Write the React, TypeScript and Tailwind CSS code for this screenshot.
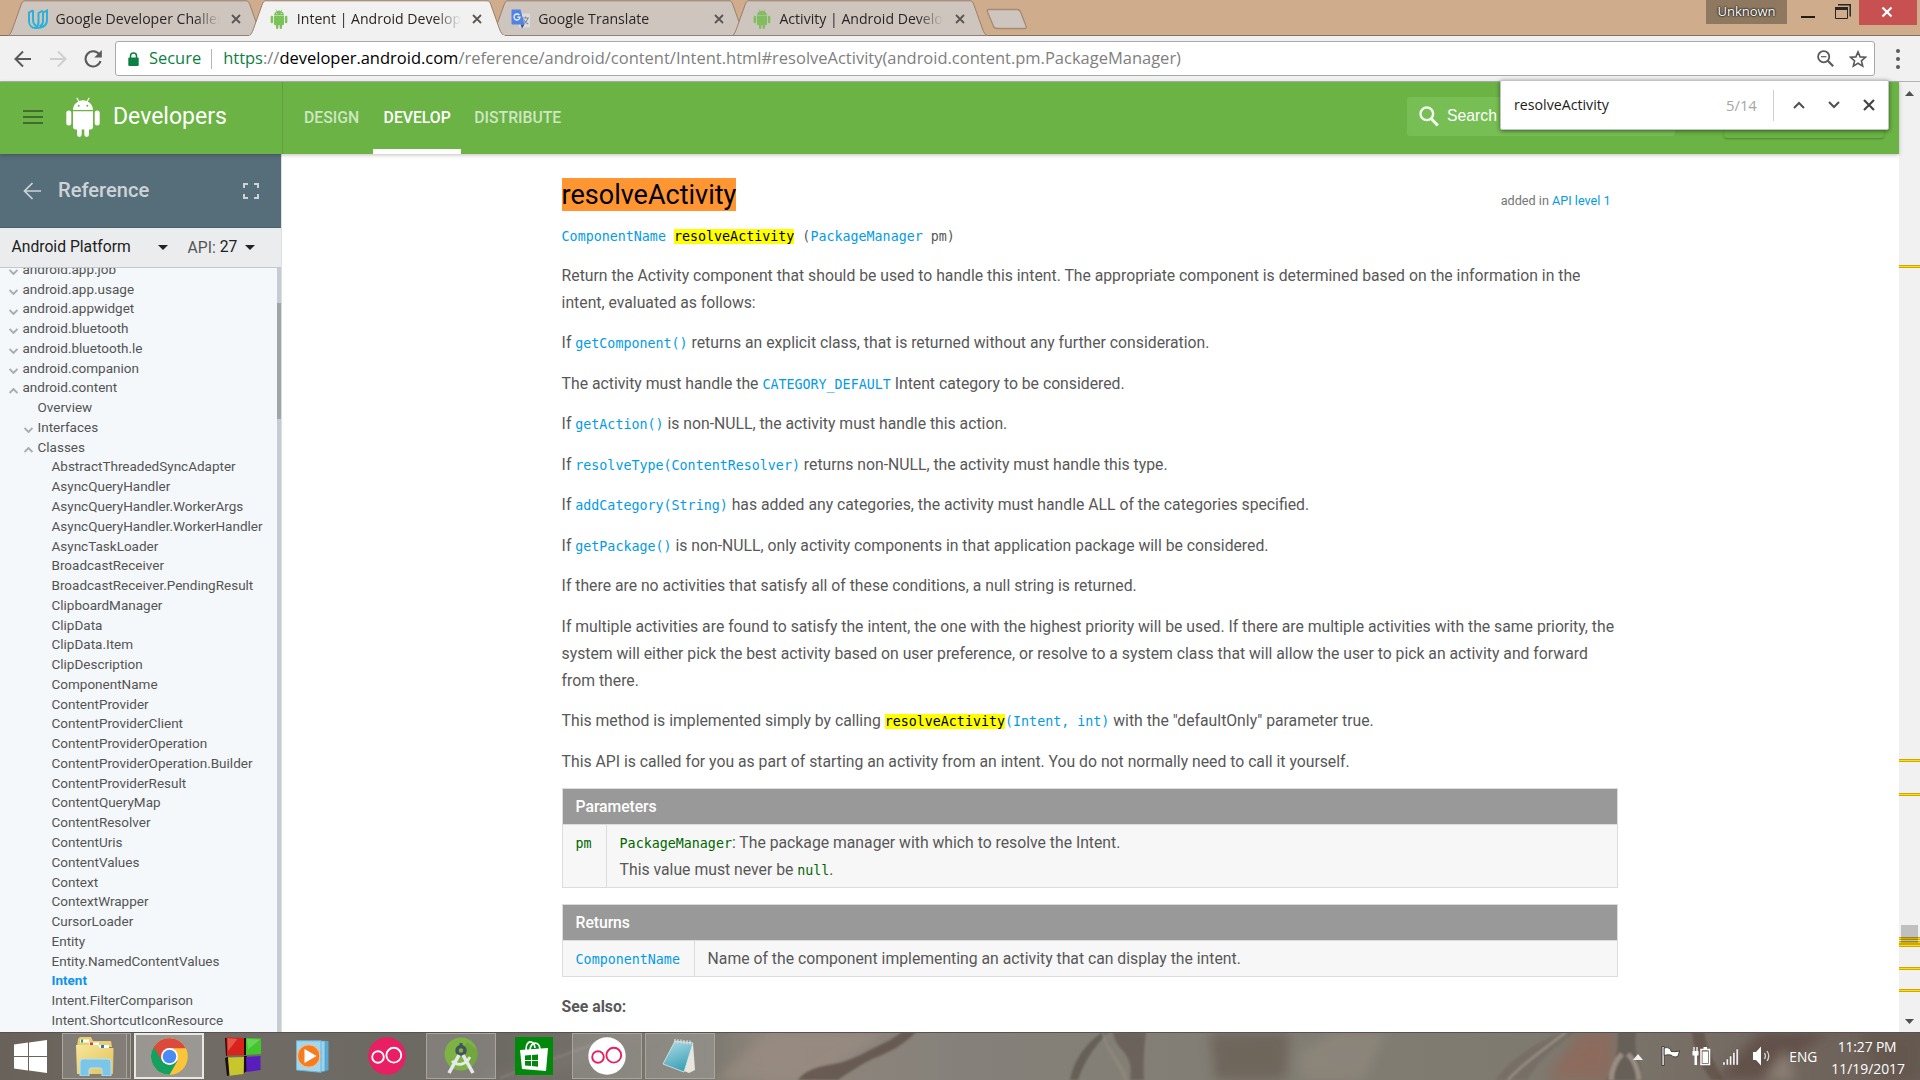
import type { ReactNode } from 'react';

const SEGOE = "font-['Open_Sans',sans-serif]";

/* ---------- small drawings ---------- */

function AndroidHead({ className, bg }: { className: string; bg: string }) {
  return (
    <svg className={className} viewBox="0 0 34 40" fill="currentColor">
      <path d="M7 13C7 8.8 9.3 5.9 12.3 4.4L10.3 1.2 11.2.6l2.1 3.3a11 11 0 0 1 7.4 0L22.8.6l.9.6-2 3.2C24.700 5.9 27 8.800 27 13z" />
      <path d="M7 14.200h20v15.900c0 1.400-1 2.300-2.300 2.300H23v5.200a2.300 2.300 0 0 1-4.700 0v-5.200h-2.600v5.200a2.300 2.300 0 0 1-4.700 0v-5.200H9.300C8 32.400 7 31.500 7 30.100z" />
      <rect x="0.300" y="13.500" width="5" height="15" rx="2.500" />
      <rect x="28.700" y="13.500" width="5" height="15" rx="2.500" />
      <circle cx="12.700" cy="8.800" r="1" fill={bg} />
      <circle cx="21.300" cy="8.800" r="1" fill={bg} />
    </svg>
  );
}

function UdacityIcon() {
  return (
    <svg className="h-[21px] w-5" viewBox="0 0 20 21" fill="none" stroke="#25b1dc" strokeWidth="1.900">
      <path d="M5 1.300 1 3.500V12c0 4.300 2.800 7 6.500 7 6.500 0 11.500-2.500 11.500-8V1.500l-4 2.300v8.400c0 2.300-1.300 4-3.500 4.800" />
      <path d="M5 1.300v9.500c0 3 1.200 5.200 3.500 6.300" />
      <path d="M7.500 19c2.200-1.300 3-3.200 3-6V4L15 1.500" />
    </svg>
  );
}

function TranslateIcon() {
  return (
    <svg className="h-5 w-5" viewBox="0 0 20 20">
      <rect x="8" y="4.500" width="11" height="14" rx="1" fill="#dcdcdc" />
      <path d="M11 9h7M14.500 7.500V9M16.800 9c-.6 2.800-2.300 4.700-4.800 6M12.500 10.500c1 2 2.500 3.500 4.800 4.500" stroke="#7d8a96" strokeWidth="1.100" fill="none" />
      <path d="M1.500.5h8l4 15h-12a1 1 0 0 1-1-1v-13a1 1 0 0 1 1-1z" fill="#5183e6" />
      <path d="m9.500 15.500 1.500 4 2.500-4z" fill="#2f55a8" />
      <path d="M8.400 6.200A3 3 0 1 0 9 8.200H6.300" stroke="#eef3ff" strokeWidth="1.300" fill="none" />
    </svg>
  );
}

function CloseX() {
  return (
    <svg className="h-[10px] w-[10px] shrink-0" viewBox="0 0 10 10" stroke="#5a5653" strokeWidth="1.800">
      <path d="M1 1l8 8M9 1L1 9" />
    </svg>
  );
}

/* ---------- browser chrome ---------- */

function Tab({ title, icon, active, first }: { title: string; icon: ReactNode; active?: boolean; first?: boolean }) {
  const fill = active ? '#f2f1f1' : '#cec5bf';
  return (
    <div className={'relative h-9 w-[256px] shrink-0 ' + (first ? '' : '-ml-[14.700px] ') + (active ? 'z-10' : '')}>
      <svg className="absolute inset-0 h-9 w-[256px]" viewBox="0 0 256 36">
        <path d="M0 36C3 34 4 30 5.500 26L13 5C14 2 15 .8 17 .8H238c2 0 3 1.200 4 4.200l8.500 24c1.500 4 3 6 5.500 7z" fill={fill} stroke="#9a8069" strokeWidth="1" />
        {active ? <path d="M.5 36H255.500" stroke="#f2f1f1" strokeWidth="2" /> : <path d="M0 35.500H256" stroke="#8f7f75" strokeWidth="1" />}
      </svg>
      <div className="relative flex h-[38px] items-center pl-5">
        <span className="flex w-5 justify-center">{icon}</span>
        <span className="ml-[7.500px] w-[164px] overflow-hidden whitespace-nowrap text-[14.100px] leading-5 text-[#2b2522] [mask-image:linear-gradient(to_right,#000_138px,transparent_164px)]">
          {title}
        </span>
        <span className="ml-[11.500px] flex">
          <CloseX />
        </span>
      </div>
    </div>
  );
}

function TabStrip() {
  const green = '#7cc25a';
  return (
    <div className={`flex h-9 shrink-0 bg-[#ceac8c] shadow-[inset_0_-1px_0_#84705f] pl-2 ${SEGOE}`}>
      <Tab first title="Google Developer Challenge" icon={<UdacityIcon />} />
      <Tab active title="Intent | Android Developers" icon={<span className="text-[#7cc25a]"><AndroidHead className="h-5 w-5" bg="#fff" /></span>} />
      <Tab title="Google Translate" icon={<TranslateIcon />} />
      <Tab title="Activity | Android Developers" icon={<span className="text-[#82bd62]"><AndroidHead className="h-5 w-5" bg={green} /></span>} />
      <svg className="-ml-[3px] mt-2 h-[22px] w-[44px]" viewBox="0 0 44 22">
        <path d="M3.500 1.500H32c2 0 3 .8 3.600 2.500l5.400 14c.7 1.600 0 2.500-1.600 2.500H12c-2 0-3-.8-3.600-2.500L2.500 4c-.6-1.500-.3-2.500 1-2.500z" fill="#cec5bf" stroke="#a38b76" strokeWidth="1.300" />
      </svg>
      <div className="ml-auto flex items-start">
        <div className="flex h-6 w-[81px] items-center justify-center bg-[#8f7860] text-[13px] text-white [text-shadow:0_0_2px_#000,0_0_2px_#000]">Unknown</div>
        <span className="ml-[14px] mt-4 h-[2px] w-[14px] bg-[#1f1c1a]" />
        <svg className="ml-5 mt-1 h-4 w-4" viewBox="0 0 16 16" fill="none" stroke="#2a2623">
          <path d="M.5 4.500h12v10H.5z" />
          <path d="M0 4.500h13" strokeWidth="3" />
          <path d="M3 .8h12.200V12.500" strokeWidth="1.500" />
        </svg>
        <div className="ml-[8px] mr-[3px] flex h-[25px] w-[58px] items-center justify-center bg-[#c75050]">
          <svg className="-mt-[1px] mr-[2px] h-[10px] w-[12px]" viewBox="0 0 12 10" stroke="#fff" strokeWidth="2.200">
            <path d="M1.500.5l9 9M10.500.5l-9 9" />
          </svg>
        </div>
      </div>
    </div>
  );
}

function Toolbar() {
  return (
    <div className={`flex h-[46px] shrink-0 items-center border-b border-[#b4b3b1] bg-[#f1f1f1] pl-[14px] text-[16.450px] ${SEGOE}`}>
      <svg className="h-[18px] w-[18px]" viewBox="0 0 18 18" fill="none" stroke="#5a5a5a" strokeWidth="2">
        <path d="M17 9H2M9 1.500 1.500 9 9 16.500" />
      </svg>
      <svg className="ml-[17px] h-[18px] w-[18px]" viewBox="0 0 18 18" fill="none" stroke="#cfcfcf" strokeWidth="2">
        <path d="M1 9h15M9 1.500 16.500 9 9 16.500" />
      </svg>
      <svg className="ml-[17px] h-[18px] w-[18px]" viewBox="0 0 18 18" fill="none" stroke="#5a5a5a" strokeWidth="2.100">
        <path d="M15.200 4.200A7.600 7.600 0 1 0 16.500 11" />
        <path d="M17.800 0v7.500h-7.500z" fill="#5a5a5a" stroke="none" />
      </svg>
      <div className="ml-[13px] flex h-[35px] w-[1760px] items-center rounded-[3px] border border-[#a9a9a9] bg-white">
        <svg className="ml-3 h-[14px] w-[11px]" viewBox="0 0 11 14">
          <path d="M2.500 6V4a3 3 0 0 1 6 0v2" fill="none" stroke="#0b8043" strokeWidth="1.500" />
          <rect x="0.300" y="5.500" width="10.400" height="8.500" rx="1" fill="#0b8043" />
        </svg>
        <span className="ml-[10px] text-[#0b8043]">Secure</span>
        <span className="ml-[10px] h-5 w-px bg-[#b5b5b5]" />
        <span className="ml-[11px] whitespace-nowrap text-[16.490px] text-[#808080]">
          <span className="text-[#0b8043]">https</span>://<span className="text-black">developer.android.com</span>
          /reference/android/content/Intent.html#resolveActivity(android.content.pm.PackageManager)
        </span>
        <svg className="ml-auto h-[17px] w-[17px]" viewBox="0 0 17 17" fill="none" stroke="#5a5a5a" strokeWidth="1.800">
          <circle cx="6.700" cy="6.700" r="5.600" />
          <path d="M4 6.700h5.400" strokeWidth="1.200" />
          <path d="M10.800 10.800l5.400 5.400" strokeWidth="2.200" />
        </svg>
        <svg className="ml-[15px] mr-[7px] h-[18px] w-[18px]" viewBox="0 0 18 18" fill="none" stroke="#5a5a5a" strokeWidth="1.600">
          <path d="M9 1.900l2.100 5 5.400.4-4.100 3.500 1.300 5.300L9 13.200l-4.700 2.900 1.300-5.300L1.500 7.300l5.400-.4z" />
        </svg>
      </div>
      <span className="ml-[21px] flex flex-col gap-1">
        <i className="h-1 w-1 rounded-full bg-[#5a5a5a]" />
        <i className="h-1 w-1 rounded-full bg-[#5a5a5a]" />
        <i className="h-1 w-1 rounded-full bg-[#5a5a5a]" />
      </span>
    </div>
  );
}

function FindBar() {
  return (
    <div className={`absolute left-[1500px] top-[80px] z-30 flex h-[50px] w-[389px] items-center rounded-[2px] border border-[#c4c4c4] bg-white pl-[13px] text-[14.200px] shadow-[0_1px_4px_rgba(0,0,0,0.500)] ${SEGOE}`}>
      <span className="w-[212px] text-[#1c1c1c]">resolveActivity</span>
      <span className="text-[14.800px] text-[#a5a5a5]">5/14</span>
      <span className="ml-4 h-[31px] w-px bg-[#d0d0d0]" />
      <svg className="ml-[19px] h-2 w-3" viewBox="0 0 12 8" fill="none" stroke="#505050" strokeWidth="2"><path d="M1 7l5-5 5 5" /></svg>
      <svg className="ml-[23px] h-2 w-3" viewBox="0 0 12 8" fill="none" stroke="#505050" strokeWidth="2"><path d="M1 1l5 5 5-5" /></svg>
      <svg className="ml-[23px] h-3 w-3" viewBox="0 0 12 12" stroke="#454545" strokeWidth="2.200"><path d="M1 1l10 10M11 1L1 11" /></svg>
    </div>
  );
}

/* ---------- site ---------- */

function SiteHeader() {
  return (
    <header className="relative z-10 flex h-[72px] w-[1899px] shrink-0 items-center bg-[#6ab344] shadow-[0_1px_4px_rgba(0,0,0,0.250)]">
      <div className="flex h-full w-[283px] shrink-0 items-center border-r border-[#5fa03d] pl-[23px]">
        <span className="mt-[-2px] flex w-5 flex-col gap-[4px]">
          <i className="h-[2px] bg-[#426d2c]" />
          <i className="h-[2px] bg-[#426d2c]" />
          <i className="h-[2px] bg-[#426d2c]" />
        </span>
        <span className="ml-[23px] mt-[-2px] text-white"><AndroidHead className="h-10 w-[34px]" bg="#6ab344" /></span>
        <span className="ml-[13px] mt-[-2px] text-[23px] text-white">Developers</span>
      </div>
      <nav className="flex h-full pl-[9px] text-[15.750px] font-medium text-[#cfe6c3]">
        <span className="flex items-center px-3 pl-[12px]">DESIGN</span>
        <span className="ml-[2px] flex h-full items-center border-b-[5px] border-white px-[10.500px] pt-[5px] text-white">DEVELOP</span>
        <span className="flex items-center px-[13px]">DISTRIBUTE</span>
      </nav>
      <div className="ml-auto mt-[-3px] flex h-[39px] w-[268px] items-center rounded-[3px] bg-[#77bf55] pl-3 text-white">
        <svg className="h-[21px] w-5" viewBox="0 0 20 21" fill="none" stroke="#f3faef">
          <circle cx="7.800" cy="7.800" r="6.300" strokeWidth="2.400" />
          <path d="M12.300 12.800l6.500 6.700" strokeWidth="3" />
        </svg>
        <span className="ml-2 mt-[-2px] font-['Liberation_Sans',sans-serif] text-[15.750px]">Search</span>
      </div>
      <div className="ml-[49px] mr-[15px] h-[39px] w-40 rounded-[3px] bg-[#6ab344] shadow-[0_1px_2px_rgba(0,0,0,0.250)]" />
    </header>
  );
}

type Item = { label: string; depth: 0 | 1 | 2; mark?: 'open' | 'closed'; current?: boolean };

const ITEMS: Item[] = [
  { label: 'android.app.job', depth: 0, mark: 'closed' },
  { label: 'android.app.usage', depth: 0, mark: 'closed' },
  { label: 'android.appwidget', depth: 0, mark: 'closed' },
  { label: 'android.bluetooth', depth: 0, mark: 'closed' },
  { label: 'android.bluetooth.le', depth: 0, mark: 'closed' },
  { label: 'android.companion', depth: 0, mark: 'closed' },
  { label: 'android.content', depth: 0, mark: 'open' },
  { label: 'Overview', depth: 1 },
  { label: 'Interfaces', depth: 1, mark: 'closed' },
  { label: 'Classes', depth: 1, mark: 'open' },
  ...[
    'AbstractThreadedSyncAdapter', 'AsyncQueryHandler', 'AsyncQueryHandler.WorkerArgs', 'AsyncQueryHandler.WorkerHandler',
    'AsyncTaskLoader', 'BroadcastReceiver', 'BroadcastReceiver.PendingResult', 'ClipboardManager', 'ClipData', 'ClipData.Item',
    'ClipDescription', 'ComponentName', 'ContentProvider', 'ContentProviderClient', 'ContentProviderOperation',
    'ContentProviderOperation.Builder', 'ContentProviderResult', 'ContentQueryMap', 'ContentResolver', 'ContentUris',
    'ContentValues', 'Context', 'ContextWrapper', 'CursorLoader', 'Entity', 'Entity.NamedContentValues', 'Intent',
    'Intent.FilterComparison', 'Intent.ShortcutIconResource',
  ].map((label): Item => ({ label, depth: 2, current: label === 'Intent' })),
];

const INDENT = { 0: 'pl-[9px]', 1: 'pl-[24px]', 2: 'pl-[38px]' };

function Sidebar() {
  return (
    <aside className="flex h-full w-[282px] shrink-0 flex-col border-r border-[#dcdfe0] bg-[#f4f8fb]">
      <div className="flex h-[74px] shrink-0 items-center border-b border-[#4a606b] bg-[#566e7a] pl-[23px] text-[#cdd4d8]">
        <svg className="h-[18px] w-[18px]" viewBox="0 0 18 18" fill="none" stroke="currentColor" strokeWidth="1.700">
          <path d="M18 9H1.500M9.500 1 1.500 9l8 8" />
        </svg>
        <span className="ml-[17px] -mt-[1px] text-[20.100px] font-medium">Reference</span>
        <svg className="ml-auto mr-[22px] h-4 w-4" viewBox="0 0 16 16" fill="none" stroke="currentColor" strokeWidth="2">
          <path d="M1 5V1h4M11 1h4v4M15 11v4h-4M5 15H1v-4" />
        </svg>
      </div>
      <div className="flex h-10 shrink-0 items-center border-b border-[#c3c8ca] bg-[#ebeced] pl-[11.500px] text-[15.700px] text-[#212121]">
        <span className="-mt-[2px] w-[146px]">Android Platform</span>
        <svg className="h-[5px] w-[10px]" viewBox="0 0 10 5"><path d="M0 0h10L5 5z" fill="#222" /></svg>
        <span className="ml-[20px] text-[#555]">API:</span>
        <span className="ml-1 -mt-[2px]">27</span>
        <svg className="ml-[8px] h-[5px] w-[10px]" viewBox="0 0 10 5"><path d="M0 0h10L5 5z" fill="#222" /></svg>
      </div>
      <div className="flex min-h-0 grow">
        <ul className="grow overflow-hidden text-[13.500px] leading-[19.770px] text-[#545454]">
          {ITEMS.map((it, i) => (
            <li key={it.label} className={'flex h-[19.770px] items-center ' + INDENT[it.depth] + (i === 0 ? ' -mt-[8.200px]' : '') + (it.current ? ' font-bold text-[#0f93ea]' : '')}>
              <span className="mt-[5px] w-[13.500px]">
                {it.mark && (
                  <svg className="h-[6px] w-[9px]" viewBox="0 0 9 6" fill="none" stroke="#a9adb0" strokeWidth="1.900">
                    <path d={it.mark === 'closed' ? 'M.5 1l4 4 4-4' : 'M.5 5l4-4 4 4'} />
                  </svg>
                )}
              </span>
              {it.label}
            </li>
          ))}
        </ul>
        <div className="w-1 shrink-0 bg-[#c3cdd3] pt-[35px]">
          <div className="h-[116px] bg-[#9ea6a9]" />
        </div>
      </div>
    </aside>
  );
}

const MONO = "font-['DejaVu_Sans_Mono',monospace] text-[13.330px]";

function Link({ children }: { children: ReactNode }) {
  return <code className={`${MONO} leading-[0] text-[#039be5]`}>{children}</code>;
}
function Code({ children }: { children: ReactNode }) {
  return <code className={`${MONO} leading-[0] text-[#006600]`}>{children}</code>;
}
function Hit({ children }: { children: ReactNode }) {
  return <mark className={`${MONO} bg-[#ffff00] leading-[0] text-black`}>{children}</mark>;
}

function Article() {
  return (
    <main className="w-[1056px] pt-[20px] text-[15.750px] leading-[27px] text-[#585858]">
      <div className="flex h-[41px] items-center justify-between">
        <h3 className="text-[27px] leading-[35px] text-black"><span className="block h-[33px] bg-[#ff9632]">resolveActivity</span></h3>
        <span className="mr-[7px] mt-3 text-[12.650px] text-[#757575]">added in <span className="text-[#039be5]">API level 1</span></span>
      </div>
      <p className={`${MONO} mt-[8px] h-[27px]`}>
        <Link>ComponentName</Link> <Hit>resolveActivity</Hit> (<Link>PackageManager</Link> pm)
      </p>
      <div className="mt-[11.600px] flex flex-col gap-[13.500px]">
        <p>Return the Activity component that should be used to handle this intent. The appropriate component is determined based on the information in the<br />intent, evaluated as follows:</p>
        <p>If <Link>getComponent()</Link> returns an explicit class, that is returned without any further consideration.</p>
        <p>The activity must handle the <Link>CATEGORY_DEFAULT</Link> Intent category to be considered.</p>
        <p>If <Link>getAction()</Link> is non-NULL, the activity must handle this action.</p>
        <p>If <Link>resolveType(ContentResolver)</Link> returns non-NULL, the activity must handle this type.</p>
        <p>If <Link>addCategory(String)</Link> has added any categories, the activity must handle ALL of the categories specified.</p>
        <p>If <Link>getPackage()</Link> is non-NULL, only activity components in that application package will be considered.</p>
        <p>If there are no activities that satisfy all of these conditions, a null string is returned.</p>
        <p>If multiple activities are found to satisfy the intent, the one with the highest priority will be used. If there are multiple activities with the same priority, the<br />system will either pick the best activity based on user preference, or resolve to a system class that will allow the user to pick an activity and forward<br />from there.</p>
        <p>This method is implemented simply by calling <Hit>resolveActivity</Hit><Link>(Intent, int)</Link> with the "defaultOnly" parameter true.</p>
        <p>This API is called for you as part of starting an activity from an intent. You do not normally need to call it yourself.</p>
      </div>
      <section className="mt-[13.400px] border border-[#dcdcdc] bg-[#f7f7f7]">
        <h4 className="flex h-[36px] items-center border-b border-[#dcdcdc] bg-[#999] pl-[13px] font-medium tracking-[-0.080px] text-white">Parameters</h4>
        <div className="flex h-[62px]">
          <div className="w-[44px] border-r border-[#dcdcdc] pl-[13px] pt-[4px]"><Code>pm</Code></div>
          <div className="pl-[13px] pt-[4px]">
            <p><Code>PackageManager</Code>: The package manager with which to resolve the Intent.</p>
            <p>This value must never be <Code>null</Code>.</p>
          </div>
        </div>
      </section>
      <section className="mt-[16px] border border-[#dcdcdc] bg-[#f7f7f7]">
        <h4 className="flex h-[36px] items-center border-b border-[#dcdcdc] bg-[#999] pl-[13px] font-medium tracking-[-0.080px] text-white">Returns</h4>
        <div className="flex h-[35px]">
          <div className="w-[132px] border-r border-[#dcdcdc] pl-[13px] pt-[4px]"><Link>ComponentName</Link></div>
          <p className="pl-[13px] pt-[4px]">Name of the component implementing an activity that can display the intent.</p>
        </div>
      </section>
      <p className="mt-[16px] font-bold">See also:</p>
    </main>
  );
}

const HITS = ['top-[183px]', 'top-[677px]', 'top-[711px]', 'top-[855px]', 'top-[859px]', 'top-[862px]', 'top-[885px]', 'top-[907px]'];

function PageScrollbar() {
  return (
    <div className="relative flex w-[21px] shrink-0 flex-col items-center justify-between bg-[#f1f1f1] pb-[8px] pt-[9px]">
      <svg className="h-[5px] w-[9px]" viewBox="0 0 9 5"><path d="M0 5h9L4.500 0z" fill="#505050" /></svg>
      <svg className="h-[5px] w-[9px]" viewBox="0 0 9 5"><path d="M0 0h9L4.500 5z" fill="#505050" /></svg>
      {HITS.map((t) => (
        <i key={t} className={`absolute left-0 h-[3px] w-full border-y border-[#cfa70c] bg-[#ffe000] ${t}`} />
      ))}
      <i className="absolute left-[2px] top-[843px] h-[18px] w-[17px] bg-black/20" />
    </div>
  );
}

/* ---------- taskbar ---------- */

function Wallpaper() {
  return (
    <svg className="absolute inset-0 h-12 w-full" viewBox="0 0 1920 48" preserveAspectRatio="none">
      <defs>
        <linearGradient id="wall" x1="0" x2="1">
          <stop offset="0" stopColor="#69625a" />
          <stop offset=".1" stopColor="#706b65" />
          <stop offset=".25" stopColor="#6c6862" />
          <stop offset=".37" stopColor="#7c7970" />
          <stop offset=".4" stopColor="#91867c" />
          <stop offset=".5" stopColor="#85817a" />
          <stop offset=".62" stopColor="#827e75" />
          <stop offset=".8" stopColor="#7f7a70" />
          <stop offset="1" stopColor="#6a5d55" />
        </linearGradient>
        <filter id="soft" x="-10%" width="120%" y="-30%" height="160%"><feGaussianBlur stdDeviation="6" /></filter>
        <filter id="edge" x="-10%" width="120%" y="-10%" height="120%"><feGaussianBlur stdDeviation="0.900" /></filter>
      </defs>
      <rect width="1920" height="48" fill="url(#wall)" />
      <g filter="url(#soft)" opacity=".8">
        <path d="M715 48 770 0h115l-70 48z" fill="#998c82" />
        <path d="M480 48 640 0h20L530 48z" fill="#7b756f" />
        <path d="M1210 0h80l-5 48h-70z" fill="#6b6057" />
        <path d="M1300 48V20l35-20h50l-20 48z" fill="#8e877c" />
        <path d="M1545 48 1580 0h35l-5 48z" fill="#90695a" />
        <path d="M1715 48 1760 0h70l-70 48z" fill="#5f4c44" />
        <path d="M1765 48l20-30 10 30z" fill="#93857a" />
        <path d="M1860 0h60v48h-40z" fill="#64564e" />
      </g>
      <g filter="url(#edge)" opacity=".8">
        <path d="M902 0h14C902 14 890 20 872 27c-12 6-24 14-34 21h-40c6-8 14-12 30-15 20-3 28-8 42-15 12-6 22-10 32-18z" fill="#5e5149" />
        <path d="M1070 48c4-20 14-34 32-48h6c-16 18-24 30-30 48z" fill="#5f5850" />
        <path d="M1113 0h33c-2 16-3 30-2 48h-14c2-12 0-20-6-28-6-6-10-12-11-20z" fill="#665b54" />
        <path d="M1104 0c2 18 18 26 24 48h-4c-6-18-20-30-22-48z" fill="#91897e" />
        <path d="M1495 48c12-16 28-28 42-36 12-6 20-10 26-12h14c-12 8-28 18-40 34-4 6-8 10-10 14z" fill="#766d63" />
        <path d="M1508 48C1524 30 1546 16 1566 0" stroke="#9d9386" strokeWidth="2.500" fill="none" />
        <path d="M1618 0h18c-2 12 0 22 4 34l2 14h-36c8-12 12-24 12-48z" fill="#635b54" />
        <path d="M1622 22c-6 6-10 14-11 26M1628 22c6 6 10 14 11 26" stroke="#a0958a" strokeWidth="5" fill="none" />
        <path d="M1692 0h12c2 14 8 28 20 48h-12c-12-14-18-28-20-48z" fill="#635348" />
        <path d="M500 46 600 10" stroke="#8a827b" strokeWidth="2" />
      </g>
      <path d="M0 .5H1920" stroke="#57524d" />
    </svg>
  );
}

function OO({ bg, fg }: { bg: string; fg: string }) {
  return (
    <svg className="h-[38px] w-[38px]" viewBox="0 0 38 38">
      <circle cx="19" cy="19" r="18.700" fill={bg} />
      <g fill="none" stroke={fg} strokeWidth="1.900">
        <circle cx="10" cy="20" r="5.800" />
        <circle cx="25.800" cy="18.200" r="7.400" />
      </g>
    </svg>
  );
}

function Slot({ width, gap, state, children }: { width: string; gap: string; state?: 'open' | 'active'; children: ReactNode }) {
  const look = state === 'active' ? 'border-2 border-[#e9e7e4] bg-white/30' : state === 'open' ? 'border border-[#a9a49e] bg-white/15' : '';
  return <div className={`flex h-[46px] shrink-0 items-center justify-center ${width} ${gap} ${look}`}>{children}</div>;
}

function Taskbar() {
  return (
    <footer className={`relative h-12 shrink-0 overflow-hidden ${SEGOE}`}>
      <Wallpaper />
      <div className="relative flex h-12 items-center">
        <Slot width="w-[61px]" gap="">
          <svg className="ml-[-1px] h-[33px] w-[33px]" viewBox="0 0 33 33" fill="#fff">
            <path d="M0 4.500 14 2.600V16H0zM15 2.400 33 0v16H15zM0 17h14v13.400L0 28.500zM15 17h18v16L15 30.600z" />
          </svg>
        </Slot>
        <Slot width="w-[65px]" gap="ml-px" state="open">
          <svg className="h-[39px] w-[40px]" viewBox="0 0 40 39">
            <defs><linearGradient id="fold" x1="0" y1="0" x2="1" y2="1"><stop offset="0" stopColor="#f6e69a" /><stop offset="1" stopColor="#e3c258" /></linearGradient></defs>
            <path d="M3 2 5 0h11l2 4h18l1 6H2z" fill="#e8cf74" />
            <path d="M5 2.500h9v3H5z" fill="#fff" /><path d="M6 2.500h2v3H6z" fill="#27a05a" />
            <path d="M14 5.500h10v3H14z" fill="#fff" /><path d="M15 5.500h3v3h-3z" fill="#dc3b2a" />
            <path d="M24 8h10v3H24z" fill="#fff" /><path d="M26 8h3v3h-3z" fill="#2b78c8" />
            <path d="M1 8h22l2 3h13.500L38 37H2z" fill="url(#fold)" />
            <path d="M5 39V25q0-3 3-3h25q3 0 3 3v14h-9v-6q0-2-2-2h-9q-2 0-2 2v6z" fill="#7cc5e6" stroke="#b5e3f5" />
          </svg>
        </Slot>
        <div className="h-[46px] w-1 border-y border-r border-[#a9a49e] bg-white/10" />
        <Slot width="w-[70px]" gap="ml-[3px]" state="active">
          <svg className="h-[37px] w-[37px]" viewBox="0 0 37 37">
            <circle cx="18.500" cy="18.500" r="18.300" fill="#fbc53a" />
            <path d="M18.500 18.500 2.800 9A18.300 18.300 0 0 0 18.500 36.800l8-14z" fill="#14a05e" />
            <path d="M18.500 10.200H34.700A18.300 18.300 0 0 0 2.800 9l8 13.800z" fill="#db4a3c" />
            <circle cx="18.500" cy="18.500" r="8.500" fill="#fff" />
            <circle cx="18.500" cy="18.500" r="6.800" fill="#4a8af4" />
          </svg>
        </Slot>
        <Slot width="w-[38px]" gap="ml-[19px]">
          <svg className="h-[39px] w-[37px]" viewBox="0 0 37 39">
            <path d="M1 1h3v17l-2 1zM1 21l3-1 2 18-3 1zM20 1h2v17h-2zM20 19h3v15l-3 2z" fill="#1c0d0a" />
            <path d="M2.500.3 20 1v17L3 18.500z" fill="#d8231b" /><path d="M3.500 1l10 1-9.500 12z" fill="#f2786c" opacity=".6" />
            <path d="M22 1l15 .5V17l-15 1z" fill="#43c52f" /><path d="M23 2l13 .5-12 10z" fill="#8be87c" opacity=".5" />
            <path d="M4 20.500 20 20l-.5 17L5.500 38.700z" fill="#c9c62c" />
            <path d="M22 20l14.500-1V33l-14 2z" fill="#5a1dbd" />
          </svg>
        </Slot>
        <Slot width="w-[34px]" gap="ml-[34px]">
          <svg className="h-[33px] w-[33px]" viewBox="0 0 33 33">
            <path d="M24 1h8.500v29L27 32z" fill="#5aa9d2" /><path d="M22 1h7v30l-5 1z" fill="#9bd3ee" stroke="#4f9fc9" strokeWidth=".7" />
            <path d="M.5.8H25v31.500L.5 30z" fill="#a4d6ed" stroke="#6db4d9" />
            <circle cx="12.700" cy="16" r="11.200" fill="#f47d20" stroke="#ffc38c" />
            <path d="M8.500 9v14l12-7z" fill="#fff" />
          </svg>
        </Slot>
        <Slot width="w-[38px]" gap="ml-[39px]"><OO bg="#e91e63" fg="#fff" /></Slot>
        <Slot width="w-[70px]" gap="ml-[20px]" state="open">
          <svg className="h-[38px] w-[34px]" viewBox="0 0 34 38">
            <circle cx="17" cy="17" r="16.500" fill="#7cb342" />
            <path d="M17 17 28 29A16.500 16.500 0 0 0 33 13L23 5z" fill="#6a9e38" opacity=".6" />
            <path d="M15.500 6h3v4h-3z" fill="#45545c" />
            <circle cx="17" cy="13.500" r="4" fill="none" stroke="#45545c" strokeWidth="3.400" />
            <path d="M15 18 5 36M19 18l10 18" stroke="#e6e9ea" strokeWidth="3.600" />
            <path d="M8 24c5 5 13 5 18-4" fill="none" stroke="#e6e9ea" strokeWidth="2.800" />
          </svg>
        </Slot>
        <Slot width="w-[38px]" gap="ml-[19px]">
          <svg className="h-[38px] w-[38px]" viewBox="0 0 38 38">
            <rect width="38" height="38" fill="#00890a" />
            <path d="M5 13l28-2-2 23-24-2z" fill="#fff" />
            <path d="M11 13c0-10 8-11 9-2M15 13c1-9 9-9 10-1" fill="none" stroke="#fff" strokeWidth="1.600" />
            <path d="M10 18.500l6-.5v5h-6zM17 18l6-.6v5.600h-6zM10 24h6v5l-6-.6zM17 24h6v5.700l-6-.6z" fill="#00890a" />
          </svg>
        </Slot>
        <Slot width="w-[70px]" gap="ml-[19px]" state="open"><OO bg="#fff" fg="#e91e63" /></Slot>
        <Slot width="w-[70px]" gap="ml-[3px]" state="open">
          <svg className="h-[36px] w-[36px]" viewBox="0 0 36 36">
            <defs><linearGradient id="note" x1="0" y1="0" x2=".4" y2="1"><stop offset="0" stopColor="#b5dfe8" /><stop offset="1" stopColor="#3fa2b8" /></linearGradient></defs>
            <path d="M31 5l2 27-6 3-5-2z" fill="#e9e5dc" />
            <path d="M13 3 31 5 22 34 1 26z" fill="url(#note)" stroke="#d9ecef" strokeWidth=".8" />
            <path d="M13 1v4M16 1.300v4M19 1.600v4M22 2v4M25 2.300v4M28 2.600v4" stroke="#dedede" strokeWidth="1.300" />
          </svg>
        </Slot>
        <div className="ml-auto mr-[15px] flex items-center text-white">
          <svg className="mt-[2px] h-[6px] w-[10px]" viewBox="0 0 10 6"><path d="M0 6h10L5 0z" fill="#f1f1f1" /></svg>
          <svg className="ml-[18px] h-5 w-[20px]" viewBox="0 0 20 20" fill="#fff" stroke="#2b2723" strokeWidth=".8">
            <path d="M1 .5h2.200v19H1z" /><path d="M3.200 2c3-1 4.500 0 6 1l1 2.500c2.500 0 5 .5 8.500-.5l-2 5.500c-3 .7-5 .5-6-1.200-2.500-.8-5-.7-7.500.2z" />
          </svg>
          <svg className="ml-[11px] h-5 w-[19px]" viewBox="0 0 19 20" fill="none" stroke="#fff">
            <path d="M9 3.500h8.500v15H9z" strokeWidth="1.500" /><path d="M10.500 5.500H16v11.500h-5.500zM11.500 1h3.500v2h-3.500zM.5 5h6v4.500H5V19H2.500V9.500h-2z" fill="#fff" stroke="none" /><path d="M2 1v4M5 1v4" strokeWidth="1.300" />
          </svg>
          <svg className="ml-[12px] h-[17px] w-[16px]" viewBox="0 0 16 17" fill="#fff">
            <path d="M0 14h2v3H0zM3.300 11h2v6h-2zM6.600 8h2v9h-2zM9.900 4.500h2V17h-2zM13.200 1h2v16h-2z" stroke="#2b2723" strokeWidth=".3" />
          </svg>
          <svg className="ml-[13px] h-5 w-[20px]" viewBox="0 0 20 20">
            <path d="M1 6h3l5-5.500v19L4 14H1z" fill="#fff" /><path d="M12.500 7q2 3 0 6M15 5q3.500 5 0 10" fill="none" stroke="#d8d4cf" strokeWidth="1.300" />
          </svg>
          <span className="ml-[17px] mt-[2px] text-[13.750px]">ENG</span>
          <span className="ml-[14px] mt-[3px] flex flex-col items-center text-[13.900px] leading-[22px]">
            <span className="-ml-[2px] tracking-[-0.150px]">11:27 PM</span>
            <span>11/19/2017</span>
          </span>
        </div>
      </div>
    </footer>
  );
}

export default function App() {
  return (
    <div className="relative flex h-[1080px] w-[1920px] flex-col overflow-hidden bg-white font-['Roboto',sans-serif]">
      <TabStrip />
      <Toolbar />
      <div className="flex h-[950px] shrink-0">
        <div className="flex w-[1899px] flex-col">
          <SiteHeader />
          <div className="flex h-[878px]">
            <Sidebar />
            <div className="overflow-hidden pl-[279.600px]">
              <Article />
            </div>
          </div>
        </div>
        <PageScrollbar />
      </div>
      <Taskbar />
      <FindBar />
    </div>
  );
}
